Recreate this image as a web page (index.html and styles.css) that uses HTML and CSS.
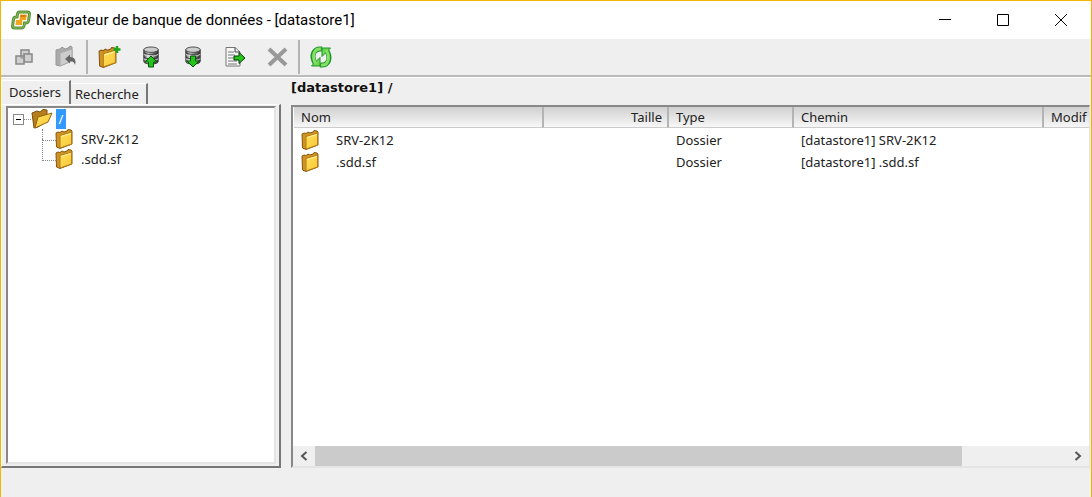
FILE: index.html
```html
<!DOCTYPE html>
<html lang="fr">
<head>
  <meta charset="UTF-8">
  <title>Navigateur de banque de données - [datastore1]</title>
  <link rel="stylesheet" href="styles.css">
</head>
<body>
  <svg class="defs" aria-hidden="true">
    <defs>
      <linearGradient id="gold" x1="0" y1="0" x2="1" y2="1">
        <stop offset="0" stop-color="#ffe05a"/><stop offset="1" stop-color="#f8c838"/>
      </linearGradient>
      <linearGradient id="metal" x1="0" y1="0" x2="1" y2="0">
        <stop offset="0" stop-color="#555"/><stop offset="0.300" stop-color="#ddd"/><stop offset="0.700" stop-color="#777"/><stop offset="1" stop-color="#333"/>
      </linearGradient>
      <symbol id="folder" viewBox="0 0 18 20">
        <path d="M1 4 L3 3 L5 3.500 L7 2 L9 3 L12 2 L13 0.500 L16 1 L17 2 V15 L5 19.500 L1.500 18 Z" fill="#cf9524" stroke="#85560f"/>
        <path d="M5 6.500 L16.500 3 V15 L5 19 Z" fill="url(#gold)" stroke="#b47d18"/>
        <path d="M6 7.500 L16 4.500" stroke="#fff0a0"/>
      </symbol>
      <symbol id="folder-open" viewBox="0 0 22 20">
        <path d="M1 4 L6 2 L9 3 L12 0.500 L16 1 V12 L7 18 L3 19 Z" fill="#b77e1c" stroke="#7a4e0c"/>
        <path d="M7 8 L21 4 L17 13 L4 19 Z" fill="url(#gold)" stroke="#946410"/>
      </symbol>
      <symbol id="disk" viewBox="0 0 20 22">
        <path d="M2 4 V17 C2 21 18 21 18 17 V4 Z" fill="url(#metal)" stroke="#333"/>
        <path d="M2 9 C5 12 15 12 18 9 M2 14 C5 17 15 17 18 14" fill="none" stroke="#ddd"/>
        <path d="M2 7 C5 10 15 10 18 7 M2 12 C5 15 15 15 18 12" fill="none" stroke="#333"/>
        <ellipse cx="10" cy="4" rx="8" ry="3" fill="#ccc" stroke="#444"/>
      </symbol>
    </defs>
  </svg>

  <div class="window">
    <header class="titlebar">
      <svg class="logo" viewBox="0 0 20 20">
        <path d="M8.500 2 H16.500 Q18.500 2 18.500 4 L17.500 11 Q17 13 15 13 H13.500 L13 16 Q12.500 18 10.500 18 H3.500 Q1.500 18 1.500 16 L2.500 9 Q3 7 5 7 H6 L6.500 4 Q7 2 8.500 2 Z" fill="#fff" stroke="#558f35" stroke-width="3"/>
        <path d="M8.500 2 H16.500 Q18.500 2 18.500 4 L17.500 11 Q17 13 15 13 H13.500 L13 16 Q12.500 18 10.500 18 H3.500 Q1.500 18 1.500 16 L2.500 9 Q3 7 5 7 H6 L6.500 4 Q7 2 8.500 2 Z" fill="none" stroke="#85bd58"/>
        <path d="M9 4.500 H16 L15 10 H11.500 L11 15 H4.500 L5 10 H8.500 Z" fill="#efa51e"/>
        <path d="M10 5 H15 L14.500 7 H9.500 Z" fill="#d67b12"/>
      </svg>
      <h1>Navigateur de banque de données - [datastore1]</h1>
      <div class="window-buttons">
        <button aria-label="Réduire"><svg viewBox="0 0 12 12"><path d="M0 5.500 H12"/></svg></button>
        <button aria-label="Agrandir"><svg viewBox="0 0 12 12"><path d="M0.500 0.500 H11.500 V11.500 H0.500 Z"/></svg></button>
        <button aria-label="Fermer"><svg viewBox="0 0 12 12"><path d="M0 0 L12 12 M12 0 L0 12"/></svg></button>
      </div>
    </header>

    <nav class="toolbar">
      <button aria-label="Nouvelle fenêtre" disabled>
        <svg viewBox="0 0 24 24"><g fill="#d0d0d0" stroke="#888" stroke-width="1.500"><path d="M10 5 H18 V13 H10 Z"/><path d="M13 9 H21 V17 H13 Z"/><path d="M5 11 H13 V19 H5 Z"/></g><path d="M10 11 V13 H13" fill="none" stroke="#888"/></svg>
      </button>
      <button aria-label="Dossier parent" disabled>
        <svg viewBox="0 0 24 24"><path d="M3 5 L7 4 L9 2 L12 4 L15 3 L17 1 L19 2 V16 L7 21 L3 20 Z" fill="#aaa" stroke="#999"/><path d="M7 8 L19 4 V16 L7 21 Z" fill="#cdcdcd" stroke="#aaa"/><path d="M12 14 L17 9.500 V12 Q24 12 22 20 Q21 16 17 16 V18.500 Z" fill="#666"/></svg>
      </button>
      <span class="divider"></span>
      <button aria-label="Nouveau dossier">
        <svg viewBox="0 0 24 24"><use href="#folder" x="1" y="2" width="19" height="21"/><path d="M20 1 V8 M16.500 4.500 H23.500" stroke="#1fa51b" stroke-width="2.500"/></svg>
      </button>
      <button aria-label="Télécharger vers la banque">
        <svg viewBox="0 0 24 24"><use href="#disk" x="3" y="1" width="18" height="20"/><path d="M12 11 L18 17 H14.500 V22 H9.500 V17 H6 Z" fill="#24c41b" stroke="#07570b"/></svg>
      </button>
      <button aria-label="Télécharger depuis la banque">
        <svg viewBox="0 0 24 24"><use href="#disk" x="3" y="1" width="18" height="20"/><path d="M12 22 L18 16 H14.500 V11 H9.500 V16 H6 Z" fill="#24c41b" stroke="#07570b"/></svg>
      </button>
      <button aria-label="Déplacer vers">
        <svg viewBox="0 0 24 24"><path d="M3 2.500 H12 L17 7 V21 H3 Z" fill="#f7f7f7" stroke="#777"/><path d="M12 2.500 V7 H17" fill="none" stroke="#444"/><path d="M5 7 H11 M5 10 H12 M5 13 H12 M5 16 H14 M5 19 H14" stroke="#777"/><path d="M11 11 H16 V7.500 L22 13 L16 18.500 V15 H11 Z" fill="#24c41b" stroke="#063d08"/></svg>
      </button>
      <button aria-label="Supprimer" disabled>
        <svg viewBox="0 0 24 24"><path d="M4 4 L21 20 M21 4 L4 20" stroke="#999" stroke-width="4"/></svg>
      </button>
      <span class="divider"></span>
      <button aria-label="Actualiser">
        <svg viewBox="0 0 24 24">
          <g id="arrow">
            <path d="M13 4 C4 3 2 11 6 18" fill="none" stroke="#1c962a" stroke-width="5"/>
            <path d="M2.500 21 H11 V12.500 Z" fill="#6fd64f" stroke="#1c962a"/>
            <path d="M12 4 C5 3 2.500 11 6.500 18.500" fill="none" stroke="#86e066" stroke-width="3"/>
          </g>
          <use href="#arrow" transform="rotate(180 12 12)"/>
        </svg>
      </button>
    </nav>

    <main class="content">
      <section class="sidebar">
        <div class="tabs" role="tablist">
          <button class="tab active" role="tab" aria-selected="true">Dossiers</button>
          <button class="tab" role="tab" aria-selected="false">Recherche</button>
        </div>
        <div class="panel">
          <div class="tree">
            <div class="tree-root">
              <button class="toggle" aria-label="Réduire le dossier"></button>
              <span class="stub"></span>
              <svg class="folder-open"><use href="#folder-open"/></svg>
              <span class="selected">/</span>
            </div>
            <ul>
              <li><svg class="folder"><use href="#folder"/></svg>SRV-2K12</li>
              <li><svg class="folder"><use href="#folder"/></svg>.sdd.sf</li>
            </ul>
          </div>
        </div>
      </section>

      <section class="browser">
        <h2>[datastore1] /</h2>
        <div class="list">
          <div class="list-view">
            <table>
              <colgroup>
                <col class="col-name"><col class="col-size"><col class="col-type"><col class="col-path"><col class="col-date">
              </colgroup>
              <thead>
                <tr><th>Nom</th><th class="right">Taille</th><th>Type</th><th>Chemin</th><th>Modif</th></tr>
              </thead>
              <tbody>
                <tr><td><span class="name"><svg class="folder"><use href="#folder"/></svg>SRV-2K12</span></td><td></td><td>Dossier</td><td>[datastore1] SRV-2K12</td><td></td></tr>
                <tr><td><span class="name"><svg class="folder"><use href="#folder"/></svg>.sdd.sf</span></td><td></td><td>Dossier</td><td>[datastore1] .sdd.sf</td><td></td></tr>
              </tbody>
            </table>
          </div>
          <div class="scrollbar">
            <button aria-label="Défiler à gauche"><svg viewBox="0 0 10 10"><path d="M7.500 1 L3 5 L7.500 9"/></svg></button>
            <div class="track"><div class="thumb"></div></div>
            <button aria-label="Défiler à droite"><svg viewBox="0 0 10 10"><path d="M2.500 1 L7 5 L2.500 9"/></svg></button>
          </div>
        </div>
      </section>
    </main>

    <footer class="statusbar"></footer>
  </div>
</body>
</html>
```
FILE: styles.css
```css
* { box-sizing: border-box; }
body { margin: 0; font-family: "Noto Sans", "Liberation Sans", sans-serif; font-size: 13px; color: #222; }
button { border: none; padding: 0; background: none; font: inherit; color: inherit; }
.defs { position: absolute; width: 0; height: 0; }

.window {
  display: flex; flex-direction: column; height: 100vh;
  border: 1px solid #f5b400; border-bottom: none; background: #efefef;
}

/* title bar */
.titlebar { display: flex; align-items: center; height: 38px; flex: none; padding-left: 10px; background: white; }
.logo { width: 20px; height: 20px; }
.titlebar h1 { margin: 0 0 0 5px; font-family: Roboto, sans-serif; font-size: 15px; font-weight: normal; color: black; white-space: nowrap; }
.window-buttons { display: flex; margin-left: auto; padding-right: 1px; }
.window-buttons button { width: 58px; height: 38px; display: flex; align-items: center; justify-content: center; }
.window-buttons svg { width: 12px; height: 12px; fill: none; stroke: black; }

/* toolbar */
.toolbar {
  display: flex; align-items: center; height: 38px; flex: none; padding-left: 1px;
  border-bottom: 2px solid #bbb;
}
.toolbar button { width: 42px; height: 36px; display: flex; align-items: center; justify-content: center; }
.toolbar svg { width: 24px; height: 24px; }
.divider { width: 2px; height: 34px; background: #b4b4b4; }

.content { display: flex; flex: 1; min-height: 0; border-top: 1px solid white; gap: 10px; }

/* folder tree */
.sidebar { display: flex; flex-direction: column; width: 280px; flex: none; }
.tabs { display: flex; align-items: flex-start; height: 26px; padding-top: 2px; }
.tab { width: 77px; height: 21px; margin-top: 3px; padding-left: 4px; border-top: 1px solid white; border-right: 2px solid #777; text-align: left; line-height: 19px; }
.tab.active { width: 70px; height: 24px; margin-top: 0; padding-left: 7px; border-left: 1px solid white; line-height: 21px; }
.panel {
  display: flex; flex: 1; padding: 1px 3px 2px 4px;
  border: 1px solid white; border-right: 2px solid #777; border-bottom: 2px solid #777;
}
.tree {
  flex: 1; padding: 1px 0 0 5px; background: white;
  border: 2px solid #888; border-right-color: #e4e4e4; border-bottom-color: #e4e4e4;
}
.tree-root { display: flex; align-items: center; height: 20px; }
.toggle { position: relative; width: 11px; height: 11px; border: 1px solid #888; background: white; }
.toggle::after { content: ""; position: absolute; left: 2px; right: 2px; top: 4px; height: 1px; background: black; }
.stub { width: 7px; border-top: 1px dotted #888; }
.folder-open { width: 22px; height: 20px; }
.selected { width: 10px; height: 20px; margin-left: 3px; background: #3399ff; color: white; text-align: center; line-height: 20px; }
.tree ul { margin: 0 0 0 29px; padding: 0; list-style: none; }
.tree li { position: relative; display: flex; align-items: center; height: 20px; padding-left: 13px; }
.tree li::before { content: ""; position: absolute; left: 0; top: 0; width: 13px; height: 11px; border-left: 1px dotted #888; border-bottom: 1px dotted #888; }
.tree li + li::before { top: -10px; height: 21px; }
.folder { width: 18px; height: 20px; flex: none; }
.tree .folder { margin-right: 8px; }

/* file list */
.browser { display: flex; flex-direction: column; flex: 1; min-width: 0; }
.browser h2 { margin: 0; height: 27px; font-family: "DejaVu Sans", sans-serif; font-size: 13px; line-height: 20px; color: #111; }
.list {
  display: flex; flex-direction: column; flex: 1; margin-right: 1px; background: white;
  border: 2px solid #888; border-right: 1px solid #e4e4e4; border-bottom: 2px solid #e4e4e4;
}
.list-view { flex: 1; overflow: hidden; padding-left: 1px; }
table { width: 100%; table-layout: fixed; border-collapse: separate; border-spacing: 0; }
.col-name { width: 250px; }
.col-size, .col-type { width: 125px; }
.col-path { width: 250px; }
th, td { padding: 0 0 0 7px; text-align: left; font-weight: normal; line-height: 20px; white-space: nowrap; }
th { height: 21px; border-right: 2px solid #b4b4b4; border-bottom: 1px solid #ccc; background: linear-gradient(#d0d0d0, #f7f7f7); }
td { height: 22px; padding-top: 2px; }
th:last-child { border-right: none; overflow: hidden; }
th.right { padding-right: 5px; text-align: right; }
.name { display: flex; align-items: center; }
.name .folder { margin-right: 17px; }

.scrollbar { display: flex; height: 20px; background: #efefef; }
.scrollbar button { width: 22px; display: flex; align-items: center; justify-content: center; }
.scrollbar svg { width: 10px; height: 10px; fill: none; stroke: #555; stroke-width: 2; }
.track { flex: 1; }
.thumb { width: 86%; height: 100%; background: #cbcbcb; }

.statusbar { height: 29px; flex: none; }
```
